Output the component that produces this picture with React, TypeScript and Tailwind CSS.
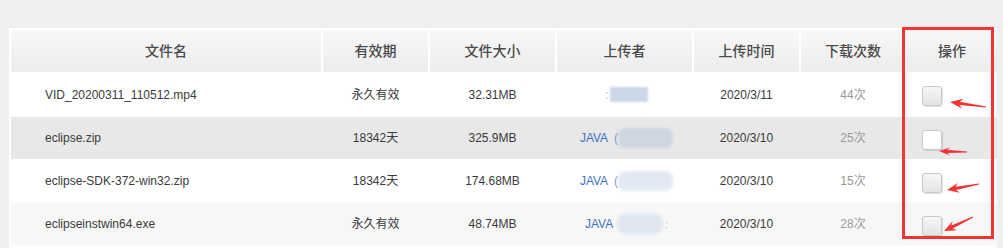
const font = { fontFamily: '"Liberation Sans", "Noto Sans CJK SC", sans-serif' }

const cols = ['w-[310px]', 'w-[105px]', 'w-[125px]', 'w-[135px]', 'w-[105px]', 'w-[104px]', 'w-[90px]']
const headers = ['文件名', '有效期', '文件大小', '上传者', '上传时间', '下载次数', '操作']

type Row = {
    name: string
    expire: string
    size: string
    count: string
    date: string
    h: string
    bg: string
    uploader: 'plain' | 'java' | 'java2'
    blob: string
    box: string
}

const rows: Row[] = [
    { name: 'VID_20200311_110512.mp4', expire: '永久有效', size: '32.31MB', date: '2020/3/11', count: '44次', h: 'h-[45px]', bg: 'bg-white', uploader: 'plain', blob: 'bg-[#cbd8e9]', box: 'bg-gradient-to-b from-[#f6f6f6] to-[#e4e4e4]' },
    { name: 'eclipse.zip', expire: '18342天', size: '325.9MB', date: '2020/3/10', count: '25次', h: 'h-[42px]', bg: 'bg-[#e8e8e8]', uploader: 'java', blob: 'bg-[#cdd6e1]', box: 'bg-white' },
    { name: 'eclipse-SDK-372-win32.zip', expire: '18342天', size: '174.68MB', date: '2020/3/10', count: '15次', h: 'h-[44px]', bg: 'bg-white', uploader: 'java', blob: 'bg-[#e3e9f2]', box: 'bg-gradient-to-b from-[#f6f6f6] to-[#e4e4e4]' },
    { name: 'eclipseinstwin64.exe', expire: '永久有效', size: '48.74MB', date: '2020/3/10', count: '28次', h: 'h-[42px]', bg: 'bg-[#f7f7f7]', uploader: 'java2', blob: 'bg-[#dfe6ef]', box: 'bg-gradient-to-b from-[#f6f6f6] to-[#e4e4e4]' },
]

const arrows = [
    { tip: [950, 102], tail: [986, 107], L: 13, W: 5 },
    { tip: [939, 151], tail: [967, 152], L: 11, W: 4 },
    { tip: [947, 190], tail: [979, 184], L: 12, W: 5 },
    { tip: [944, 231], tail: [973, 217], L: 12, W: 5 },
]

const arrowPoints = (a: (typeof arrows)[number]) => {
    const [tx, ty] = a.tip
    const [ex, ey] = a.tail
    const len = Math.hypot(ex - tx, ey - ty)
    const dx = (ex - tx) / len
    const dy = (ey - ty) / len
    const nx = -dy
    const ny = dx
    const p = (x: number, y: number) => `${x.toFixed(1)},${y.toFixed(1)}`
    return [
        p(tx, ty),
        p(tx + dx * a.L + nx * a.W, ty + dy * a.L + ny * a.W),
        p(tx + dx * a.L * 0.75 + nx * 1.6, ty + dy * a.L * 0.75 + ny * 1.6),
        p(ex + nx * 0.4, ey + ny * 0.4),
        p(ex - nx * 0.4, ey - ny * 0.4),
        p(tx + dx * a.L * 0.75 - nx * 1.6, ty + dy * a.L * 0.75 - ny * 1.6),
        p(tx + dx * a.L - nx * a.W, ty + dy * a.L - ny * a.W),
    ].join(' ')
}

const Uploader = ({ row }: { row: Row }) => {
    if (row.uploader === 'plain') {
        return (
            <div className="flex items-center">
                <span className="text-[#b9a9c9] blur-[0.5px]">:</span>
                <div className={`w-[38px] h-[15px] ml-[1px] ${row.blob} blur-[0.8px]`} />
            </div>
        )
    }
    return (
        <div className="flex items-center">
            <span className="text-[#3f73c2]">JAVA</span>
            {row.uploader === 'java' ? (
                <>
                    <span className="text-[#7a9cd0] ml-[6px]">(</span>
                    <div className={`w-[55px] h-[20px] rounded-[8px] ${row.blob} blur-[1.5px]`} />
                </>
            ) : (
                <>
                    <div className={`w-[46px] h-[20px] ml-[4px] rounded-[8px] ${row.blob} blur-[1.5px]`} />
                    <span className="text-[#8fb0dc] text-[10px] ml-[2px] blur-[0.3px]">:</span>
                </>
            )}
        </div>
    )
}

const App = () => {
    return (
        <div className="relative w-[1003px] h-[248px] bg-[#efefef] overflow-hidden text-[12px]" style={font}>
            <div className="ml-[9px] mt-[28px] w-[988px] h-[220px] bg-white pl-[2px] pt-[2px]">
                <div className="flex gap-[2px] h-[42px]">
                    {headers.map((h, i) => (
                        <div
                            key={h}
                            className={`${cols[i]} ${i === 0 ? 'rounded-tl-[4px]' : ''} flex items-center justify-center bg-gradient-to-b from-[#f8f8f8] to-[#ececec] text-[14px] font-medium text-[#4a4a4a]`}
                        >
                            {h}
                        </div>
                    ))}
                </div>
                {rows.map(row => (
                    <div key={row.name} className={`flex gap-[2px] ${row.h} ${row.bg} text-[#3a3a3a]`}>
                        <div className={`${cols[0]} flex items-center pl-[34px]`}>{row.name}</div>
                        <div className={`${cols[1]} flex items-center justify-center`}>{row.expire}</div>
                        <div className={`${cols[2]} flex items-center justify-center`}>{row.size}</div>
                        <div className={`${cols[3]} flex items-center justify-center pl-[4px]`}>
                            <Uploader row={row} />
                        </div>
                        <div className={`${cols[4]} flex items-center justify-center`}>{row.date}</div>
                        <div className={`${cols[5]} flex items-center justify-center text-[#999]`}>{row.count}</div>
                        <div className={`${cols[6]} flex items-center pl-[15px] pt-[3px]`}>
                            <div className={`w-[20px] h-[20px] rounded-[3px] border border-[#c8c8c8] shadow-[1px_1px_1px_rgba(0,0,0,0.12)] ${row.box}`} />
                        </div>
                    </div>
                ))}
            </div>

            {/* annotation overlay */}
            <div className="absolute left-[902px] top-[27px] w-[92px] h-[212px] border-[3px] border-[#f43434]" />
            <svg className="absolute inset-0 pointer-events-none" width="1003" height="248">
                {arrows.map((a, i) => (
                    <polygon key={i} points={arrowPoints(a)} fill="#f43434" />
                ))}
            </svg>
        </div>
    )
}

export default App
